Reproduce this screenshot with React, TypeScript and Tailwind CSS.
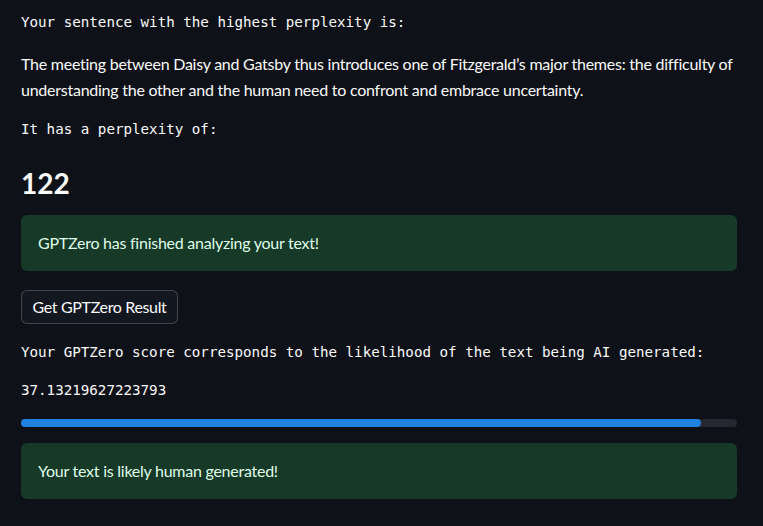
export default function App() {
  const mono = "font-['DejaVu_Sans_Mono','Liberation_Mono',monospace]"
  const sans = "font-['Lato','Noto_Sans',sans-serif]"
  return (
    <div className="min-h-screen w-full bg-[#0e1117] text-[#fafafa] pt-[12px]">
      <div className="w-[716px] ml-[21px] pb-[20px]">
        {/* Highest perplexity sentence */}
        <div className={`${mono} text-[14.2px] leading-[21px] h-[21px] whitespace-nowrap`}>
          Your sentence with the highest perplexity is:
        </div>
        <p className={`${sans} text-[16px] leading-[26px] mt-[18px] tracking-[-0.25px]`}>
          <span className="whitespace-nowrap">
            The meeting between Daisy and Gatsby thus introduces one of Fitzgerald’s major themes: the difficulty of
          </span>
          <br />
          understanding the other and the human need to confront and embrace uncertainty.
        </p>
        <div className={`${mono} text-[14.2px] leading-[21px] mt-[16px] h-[21px] whitespace-nowrap`}>
          It has a perplexity of:
        </div>
        <h3 className={`${sans} text-[28px] leading-[36px] font-bold mt-[25px] h-[36px]`}>122</h3>

        {/* Status */}
        <div className={`${sans} mt-[14px] h-[56px] rounded-md bg-[#173928] text-[#dffde9] text-[16px] flex items-center px-[17px] tracking-[-0.25px]`}>
          GPTZero has finished analyzing your text!
        </div>

        <button
          className={`${sans} mt-[19px] h-[34px] w-[157px] rounded-md border border-[#fafafa]/20 bg-[#131720] text-[16px] text-[#fafafa] flex items-center justify-center tracking-[-0.35px]`}
        >
          Get GPTZero Result
        </button>

        <div className={`${mono} text-[14.2px] leading-[21px] mt-[18px] h-[21px] whitespace-nowrap`}>
          Your GPTZero score corresponds to the likelihood of the text being AI generated:
        </div>
        <div className={`${mono} text-[14.2px] leading-[21px] mt-[17px] h-[21px]`}>37.13219627223793</div>

        {/* Progress */}
        <div className="mt-[18px] h-[8px] w-full rounded-full bg-[#262730]">
          <div className="h-full rounded-full bg-[#1f81e0]" style={{ width: "95%" }} />
        </div>

        <div className={`${sans} mt-[16px] h-[56px] rounded-md bg-[#173928] text-[#dffde9] text-[16px] flex items-center px-[17px] tracking-[-0.25px]`}>
          Your text is likely human generated!
        </div>
      </div>
    </div>
  )
}
